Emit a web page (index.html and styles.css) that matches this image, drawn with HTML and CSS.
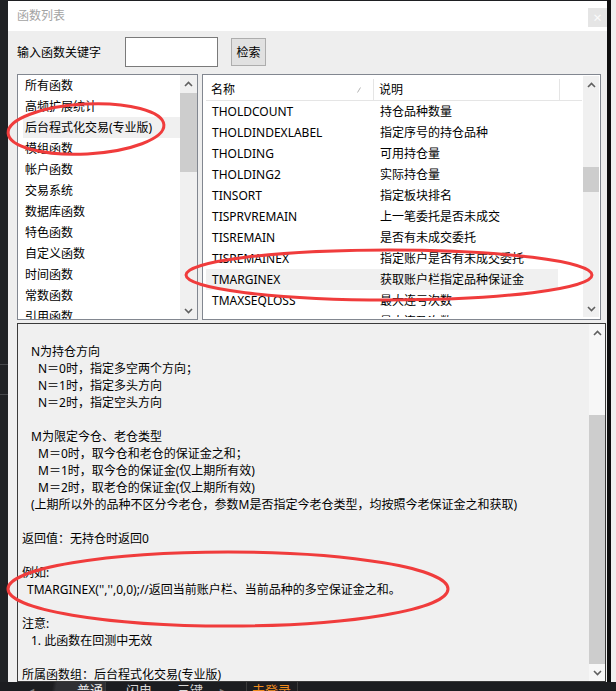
FILE: index.html
```html
<!DOCTYPE html>
<html lang="zh-CN">
<head>
    <meta charset="UTF-8">
    <title>函数列表</title>
    <link rel="stylesheet" href="styles.css">
</head>
<body>
    <div class="screen">
        <div class="side-left">
            <span class="side-line first"></span>
            <span class="side-line"></span>
        </div>

        <div class="window">
            <div class="titlebar">
                <span class="title">函数列表</span>
                <span class="close">×</span>
            </div>

            <div class="search">
                <label class="search-label" for="keyword">输入函数关键字</label>
                <input class="search-input" id="keyword" type="text">
                <button class="search-btn" type="button">检索</button>
            </div>

            <div class="lists">
                <div class="group-list">
                    <ul class="groups">
                        <li>所有函数</li>
                        <li>高频扩展统计</li>
                        <li class="active">后台程式化交易(专业版)</li>
                        <li>模组函数</li>
                        <li>帐户函数</li>
                        <li>交易系统</li>
                        <li>数据库函数</li>
                        <li>特色函数</li>
                        <li>自定义函数</li>
                        <li>时间函数</li>
                        <li>常数函数</li>
                        <li>引用函数</li>
                    </ul>
                    <div class="scrollbar">
                        <div class="sb-btn"><svg width="9" height="6" viewBox="0 0 9 6"><polyline points="1,5 4.5,1.5 8,5"/></svg></div>
                        <div class="sb-track"><div class="sb-thumb thumb-groups"></div></div>
                        <div class="sb-btn"><svg width="9" height="6" viewBox="0 0 9 6"><polyline points="1,1 4.5,4.5 8,1"/></svg></div>
                    </div>
                </div>

                <div class="func-list">
                    <div class="func-table">
                        <div class="func-head">
                            <div class="col-name">名称<svg class="sort-mark" width="4" height="6" viewBox="0 0 4 6"><line x1="3.5" y1="0.5" x2="0.5" y2="5.5"/></svg></div>
                            <div class="col-desc">说明</div>
                            <div class="col-fill"></div>
                        </div>
                        <div class="func-row"><span class="c1">THOLDCOUNT</span><span class="c2">持仓品种数量</span></div>
                        <div class="func-row"><span class="c1">THOLDINDEXLABEL</span><span class="c2">指定序号的持仓品种</span></div>
                        <div class="func-row"><span class="c1">THOLDING</span><span class="c2">可用持仓量</span></div>
                        <div class="func-row"><span class="c1">THOLDING2</span><span class="c2">实际持仓量</span></div>
                        <div class="func-row"><span class="c1">TINSORT</span><span class="c2">指定板块排名</span></div>
                        <div class="func-row"><span class="c1">TISPRVREMAIN</span><span class="c2">上一笔委托是否未成交</span></div>
                        <div class="func-row"><span class="c1">TISREMAIN</span><span class="c2">是否有未成交委托</span></div>
                        <div class="func-row"><span class="c1">TISREMAINEX</span><span class="c2">指定账户是否有未成交委托</span></div>
                        <div class="func-row active"><span class="c1">TMARGINEX</span><span class="c2">获取账户栏指定品种保证金</span></div>
                        <div class="func-row"><span class="c1">TMAXSEQLOSS</span><span class="c2">最大连亏次数</span></div>
                        <div class="func-row"><span class="c1">TMAXSEQWIN</span><span class="c2">最大连盈次数</span></div>
                    </div>
                    <div class="scrollbar narrow">
                        <div class="sb-btn"><svg width="9" height="6" viewBox="0 0 9 6"><polyline points="1,5 4.5,1.5 8,5"/></svg></div>
                        <div class="sb-track"><div class="sb-thumb thumb-funcs"></div></div>
                        <div class="sb-btn"><svg width="9" height="6" viewBox="0 0 9 6"><polyline points="1,1 4.5,4.5 8,1"/></svg></div>
                    </div>
                </div>
            </div>

            <div class="help">
                <div class="help-text">
                    <div class="i2">N为持仓方向</div>
                    <div class="i3">N＝0时，指定多空两个方向；</div>
                    <div class="i3">N＝1时，指定多头方向</div>
                    <div class="i3">N＝2时，指定空头方向</div>
                    <div class="blank"></div>
                    <div class="i2">M为限定今仓、老仓类型</div>
                    <div class="i3">M＝0时，取今仓和老仓的保证金之和；</div>
                    <div class="i3">M＝1时，取今仓的保证金(仅上期所有效)</div>
                    <div class="i3">M＝2时，取老仓的保证金(仅上期所有效)</div>
                    <div class="i2">(上期所以外的品种不区分今老仓，参数M是否指定今老仓类型，均按照今老保证金之和获取)</div>
                    <div class="blank"></div>
                    <div>返回值：无持仓时返回0</div>
                    <div class="blank"></div>
                    <div>例如:</div>
                    <div class="i1">TMARGINEX('','',0,0);//返回当前账户栏、当前品种的多空保证金之和。</div>
                    <div class="blank"></div>
                    <div>注意:</div>
                    <div class="i2">1. 此函数在回测中无效</div>
                    <div class="blank"></div>
                    <div>所属函数组：后台程式化交易(专业版)</div>
                </div>
                <div class="scrollbar narrow light">
                    <div class="sb-btn"><svg width="9" height="6" viewBox="0 0 9 6"><polyline points="1,5 4.5,1.5 8,5"/></svg></div>
                    <div class="sb-track"><div class="sb-thumb thumb-help"></div></div>
                    <div class="sb-btn"><svg width="9" height="6" viewBox="0 0 9 6"><polyline points="1,1 4.5,4.5 8,1"/></svg></div>
                </div>
            </div>
        </div>

        <div class="side-right"></div>
    </div>

    <div class="taskbar">
        <span class="tb-arrow">◄</span>
        <span class="tb-tab current">普通</span>
        <span class="tb-tab">闪电</span>
        <span class="tb-tab">三键</span>
        <span class="tb-arrow right">►</span>
        <span class="tb-login">未登录</span>
    </div>

    <svg class="marks" width="616" height="691" viewBox="0 0 616 691">
        <ellipse cx="86" cy="129" rx="78" ry="25" transform="rotate(-3 86 129)"/>
        <ellipse cx="389" cy="275" rx="203" ry="25"/>
        <ellipse cx="228" cy="589" rx="220" ry="37"/>
    </svg>
</body>
</html>
```

FILE: styles.css
```css
* {
    box-sizing: border-box;
}
body {
    margin: 0;
    width: 616px;
    height: 691px;
    overflow: hidden;
    position: relative;
    background: #1e1f22;
    font-family: "Noto Sans", "Noto Sans CJK SC", sans-serif;
    font-size: 12px;
    color: #000;
}
.screen {
    display: flex;
    height: 682px;
}
.side-left {
    width: 8px;
    display: flex;
    flex-direction: column;
    background: #202225;
}
.side-line {
    height: 1px;
    margin-top: 29px;
    background: #45474b;
}
.side-line.first {
    margin-top: 364px;
}
.window {
    width: 599px;
    margin-top: 1px;
    background: #eeeeee;
    display: flex;
    flex-direction: column;
}
.side-right {
    flex: 1;
    border-left: 4px solid #0e0e0f;
    background: #f0f0f0;
}

/* title bar */
.titlebar {
    height: 30px;
    flex: none;
    background: #fff;
    display: flex;
    justify-content: space-between;
    padding-left: 9px;
}
.title {
    color: #a3a3a3;
    line-height: 30px;
}
.close {
    width: 19px;
    height: 19px;
    margin-top: 7px;
    background: #e5e5e5;
    color: #fbfbfb;
    font-size: 15px;
    line-height: 19px;
    text-align: center;
}

/* search row */
.search {
    height: 42px;
    flex: none;
    display: flex;
    align-items: center;
    padding-left: 9px;
}
.search-label {
    width: 108px;
}
.search-input {
    width: 93px;
    height: 30px;
    margin: 0;
    padding: 0 3px;
    border: 1px solid #7a7a7a;
    background: #fff;
    font: inherit;
}
.search-btn {
    width: 35px;
    height: 28px;
    margin: 0 0 0 13px;
    padding: 0;
    border: 1px solid #adadad;
    background: #e1e1e1;
    color: #000;
    font: inherit;
}

/* group list + function list */
.lists {
    display: flex;
    gap: 4px;
    height: 246px;
    flex: none;
    margin: 1px 6px 0 9px;
}
.group-list {
    width: 181px;
    border: 1px solid #828790;
    background: #fff;
    display: flex;
}
.groups {
    flex: 1;
    margin: 0;
    padding: 0;
    list-style: none;
    overflow: hidden;
}
.groups li {
    height: 21px;
    line-height: 21px;
    margin-left: 5px;
    padding-left: 2px;
    white-space: nowrap;
}
.groups li.active {
    background: #f0f0f0;
}

.scrollbar {
    width: 17px;
    flex: none;
    display: flex;
    flex-direction: column;
    background: #f0f0f0;
}
.scrollbar.narrow {
    width: 16px;
}
.scrollbar.light {
    background: #f7f7f7;
}
.sb-btn {
    height: 17px;
    flex: none;
    display: flex;
    align-items: center;
    justify-content: center;
}
.sb-btn svg {
    fill: none;
    stroke: #606060;
    stroke-width: 1.6;
}
.sb-track {
    flex: 1;
}
.sb-thumb {
    background: #cdcdcd;
}
.thumb-groups {
    margin-top: 1px;
    height: 79px;
}
.thumb-funcs {
    margin-top: 74px;
    height: 25px;
}
.thumb-help {
    margin-top: 74px;
    height: 249px;
}

.func-list {
    flex: 1;
    border: 1px solid #828790;
    background: #fff;
    display: flex;
    padding: 1px 1px 2px 3px;
}
.func-table {
    flex: 1;
    margin-top: 3px;
    margin-right: 1px;
    overflow: hidden;
}
.func-head {
    display: flex;
    height: 22px;
    border-bottom: 1px solid #e5e5e5;
    line-height: 21px;
}
.col-name {
    width: 168px;
    padding: 0 12px 0 5px;
    border-right: 1px solid #e5e5e5;
    display: flex;
    align-items: center;
    justify-content: space-between;
}
.sort-mark {
    stroke: #b5b5b5;
    stroke-width: 1;
}
.col-desc {
    width: 186px;
    padding-left: 5px;
    border-right: 1px solid #e5e5e5;
}
.col-fill {
    flex: 1;
}
.func-row {
    display: flex;
    width: 352px;
    height: 21px;
    line-height: 21px;
    white-space: nowrap;
}
.func-row.active {
    background: #f0f0f0;
}
.func-row .c1 {
    width: 168px;
    padding-left: 6px;
}
.func-row .c2 {
    padding-left: 6px;
}

/* help text */
.help {
    height: 359px;
    flex: none;
    margin: 3px 1px 0 9px;
    border: 1px solid #3a3a3a;
    background: #f0f0f0;
    display: flex;
}
.help-text {
    flex: 1;
    padding: 19px 0 0 4px;
    line-height: 17px;
    white-space: nowrap;
    overflow: hidden;
}
.blank {
    height: 17px;
}
.i1 {
    padding-left: 5px;
}
.i2 {
    padding-left: 9px;
}
.i3 {
    padding-left: 16px;
}

/* strip of the app behind */
.taskbar {
    height: 9px;
    display: flex;
    overflow: hidden;
    background: #1c1d20;
    font-size: 13px;
    line-height: 13px;
}
.taskbar span {
    padding-top: 2px;
}
.tb-arrow {
    width: 16px;
    margin-left: 27px;
    color: #7a7a7a;
    font-size: 9px;
}
.tb-arrow.right {
    margin-left: 10px;
    width: 29px;
    border-right: 1px solid #3a3a3a;
}
.tb-tab {
    width: 51px;
    color: #d8d8d8;
}
.tb-tab.current {
    width: 63px;
    padding-left: 34px;
    background: linear-gradient(100deg, #1c1d20 0, #1c1d20 10px, #2f3034 14px);
    border-right: 1px solid #3a3a3a;
    color: #ececec;
}
.tb-tab + .tb-tab {
    padding-left: 20px;
}
.tb-login {
    width: 51px;
    padding-left: 5px;
    color: #f08c1e;
    border-right: 1px solid #3a3a3a;
}

/* red annotation rings drawn over the screenshot */
.marks {
    position: absolute;
    left: 0;
    top: 0;
    pointer-events: none;
}
.marks ellipse {
    fill: none;
    stroke: #f03c3c;
    stroke-width: 3;
}
```
